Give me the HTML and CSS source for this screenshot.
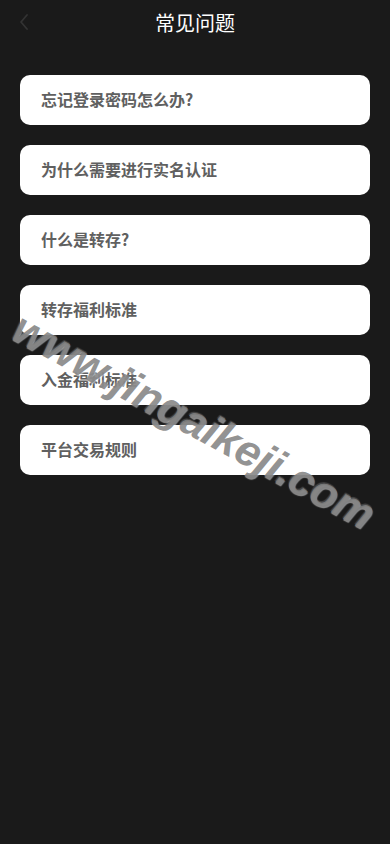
FILE: index.html
```html
<!DOCTYPE html>
<html lang="zh-CN">
<head>
<meta charset="utf-8">
<meta name="viewport" content="width=device-width, initial-scale=1">
<title>常见问题</title>
<link rel="stylesheet" href="styles.css">
</head>
<body>
<div class="page">
  <header class="topbar">
    <span class="back">
      <svg width="12" height="20" viewBox="0 0 12 20"><path d="M9 3 L3 10 L9 17" fill="none" stroke="#333" stroke-width="1.8" stroke-linecap="round" stroke-linejoin="round"/></svg>
    </span>
    <h1 class="title">常见问题</h1>
  </header>
  <ul class="faq">
    <li class="item">忘记登录密码怎么办?</li>
    <li class="item">为什么需要进行实名认证</li>
    <li class="item">什么是转存?</li>
    <li class="item">转存福利标准</li>
    <li class="item">入金福利标准</li>
    <li class="item">平台交易规则</li>
  </ul>
  <div class="watermark">www.jingaikeji.com</div>
</div>
</body>
</html>
```
FILE: styles.css
```css
html, body {
  margin: 0;
  padding: 0;
  background: #1a1a1a;
}
body {
  font-family: "Noto Sans CJK SC", "Noto Sans", sans-serif;
}
.page {
  position: relative;
  width: 390px;
  min-height: 844px;
  background: #1a1a1a;
  overflow: hidden;
}
.topbar {
  position: relative;
  height: 46px;
  display: flex;
  align-items: center;
  justify-content: center;
}
.back {
  position: absolute;
  left: 18px;
  top: 12px;
  display: flex;
}
.title {
  margin: 0;
  font-size: 20px;
  font-weight: 400;
  color: #fff;
  line-height: 46px;
}
.faq {
  list-style: none;
  margin: 29px 0 0;
  padding: 0 20px;
  display: flex;
  flex-direction: column;
  gap: 20px;
}
.item {
  height: 50px;
  box-sizing: border-box;
  background: #fff;
  border-radius: 10px;
  padding: 0 21px 3px;
  display: flex;
  align-items: center;
  font-size: 16px;
  font-weight: 700;
  color: #606060;
}
.watermark {
  position: absolute;
  left: 194px;
  top: 421px;
  transform: translate(-50%, -50%) rotate(28.5deg);
  font-family: "Liberation Sans", Arial, sans-serif;
  font-size: 44px;
  font-weight: 700;
  font-style: italic;
  color: rgba(128, 128, 128, 0.85);
  text-shadow: 1px 1px 1px rgba(255, 255, 255, 0.5), -1px -1px 1px rgba(255,255,255,0.2);
  white-space: nowrap;
  pointer-events: none;
}
```
